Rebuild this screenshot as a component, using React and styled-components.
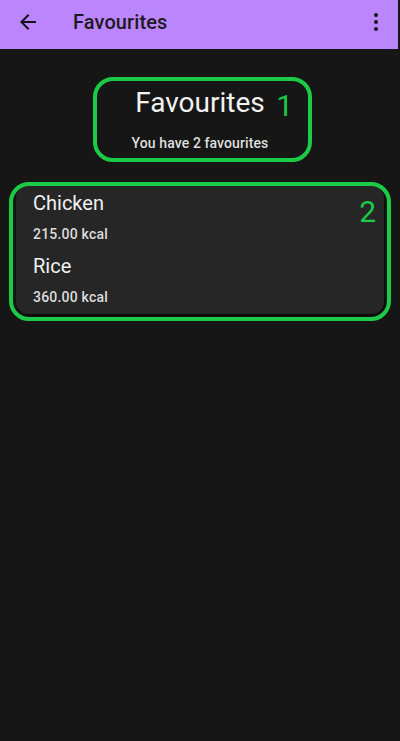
import React from "react";
import styled, { createGlobalStyle } from "styled-components";

const Global = createGlobalStyle`
  html, body { margin: 0; padding: 0; background: #161616; }
  body { font-family: Roboto, "Noto Sans", sans-serif; }
  #root { min-height: 741px; }
`;

const Screen = styled.div`
  position: relative;
  width: 400px;
  height: 741px;
  background: #161616;
  overflow: hidden;
`;

const TopBar = styled.header`
  width: 398px;
  height: 49px;
  box-sizing: border-box;
  background: #bb86fc;
  display: flex;
  align-items: center;
  padding: 0 0 5px 16px;
`;

const IconButton = styled.div`
  width: 24px;
  height: 24px;
  display: flex;
  align-items: center;
  justify-content: center;
  color: #141218;
`;

const BarTitle = styled.h1`
  margin: 0 0 0 33px;
  flex: 1;
  font-size: 20px;
  font-weight: 500;
  color: #1d1a22;
  letter-spacing: 0.1px;
`;

const MenuButton = styled(IconButton)`
  margin-right: 10px;
`;

const Header = styled.section`
  display: flex;
  flex-direction: column;
  align-items: center;
  padding-top: 38px;
`;

const Title = styled.h2`
  margin: 0;
  font-size: 28px;
  line-height: 32px;
  font-weight: 400;
  color: #f2f2f2;
`;

const Subtitle = styled.p`
  margin: 14px 0 0;
  font-size: 14px;
  line-height: 20px;
  font-weight: 500;
  letter-spacing: 0.1px;
  color: #dedede;
`;

const Card = styled.ul`
  list-style: none;
  margin: 33px 16px 0;
  padding: 5px 17px 7px;
  background: #262626;
  border-radius: 12px;
  box-shadow: 1px 2px 3px rgba(0, 0, 0, 0.6);
  display: flex;
  flex-direction: column;
  gap: 10px;
`;

const Item = styled.li`
  display: flex;
  flex-direction: column;
  gap: 9px;
`;

const ItemName = styled.span`
  font-size: 20px;
  line-height: 24px;
  color: #f0f0f0;
`;

const ItemKcal = styled.span`
  font-size: 14px;
  line-height: 20px;
  font-weight: 500;
  letter-spacing: 0.2px;
  color: #dcdcdc;
`;

const Annotation = styled.div`
  position: absolute;
  left: ${(p) => p.$x}px;
  top: ${(p) => p.$y}px;
  width: ${(p) => p.$w}px;
  height: ${(p) => p.$h}px;
  box-sizing: border-box;
  border: 4px solid #1bcb47;
  border-radius: 20px;
  pointer-events: none;
`;

const AnnotationLabel = styled.span`
  position: absolute;
  right: ${(p) => p.$right}px;
  top: ${(p) => p.$top}px;
  font-family: Roboto, sans-serif;
  font-size: 30px;
  line-height: 30px;
  font-weight: 400;
  color: #1bcb47;
`;

const items = [
  { name: "Chicken", kcal: "215.00 kcal" },
  { name: "Rice", kcal: "360.00 kcal" },
];

export default function App() {
  return (
    <Screen>
      <Global />
      <TopBar>
        <IconButton>
          <svg width="24" height="24" viewBox="0 0 24 24">
            <path
              d="M20 11H7.83l5.59-5.59L12 4l-8 8 8 8 1.41-1.41L7.83 13H20v-2z"
              fill="currentColor"
            />
          </svg>
        </IconButton>
        <BarTitle>Favourites</BarTitle>
        <MenuButton>
          <svg width="24" height="24" viewBox="0 0 24 24">
            <circle cx="12" cy="5" r="2" fill="currentColor" />
            <circle cx="12" cy="12" r="2" fill="currentColor" />
            <circle cx="12" cy="19" r="2" fill="currentColor" />
          </svg>
        </MenuButton>
      </TopBar>
      <Header>
        <Title>Favourites</Title>
        <Subtitle>You have 2 favourites</Subtitle>
      </Header>
      <Card>
        {items.map((it) => (
          <Item key={it.name}>
            <ItemName>{it.name}</ItemName>
            <ItemKcal>{it.kcal}</ItemKcal>
          </Item>
        ))}
      </Card>
      <Annotation $x={93} $y={77} $w={219} $h={85}>
        <AnnotationLabel $right={15} $top={10}>1</AnnotationLabel>
      </Annotation>
      <Annotation $x={9} $y={182} $w={382} $h={139}>
        <AnnotationLabel $right={11} $top={11}>2</AnnotationLabel>
      </Annotation>
    </Screen>
  );
}
